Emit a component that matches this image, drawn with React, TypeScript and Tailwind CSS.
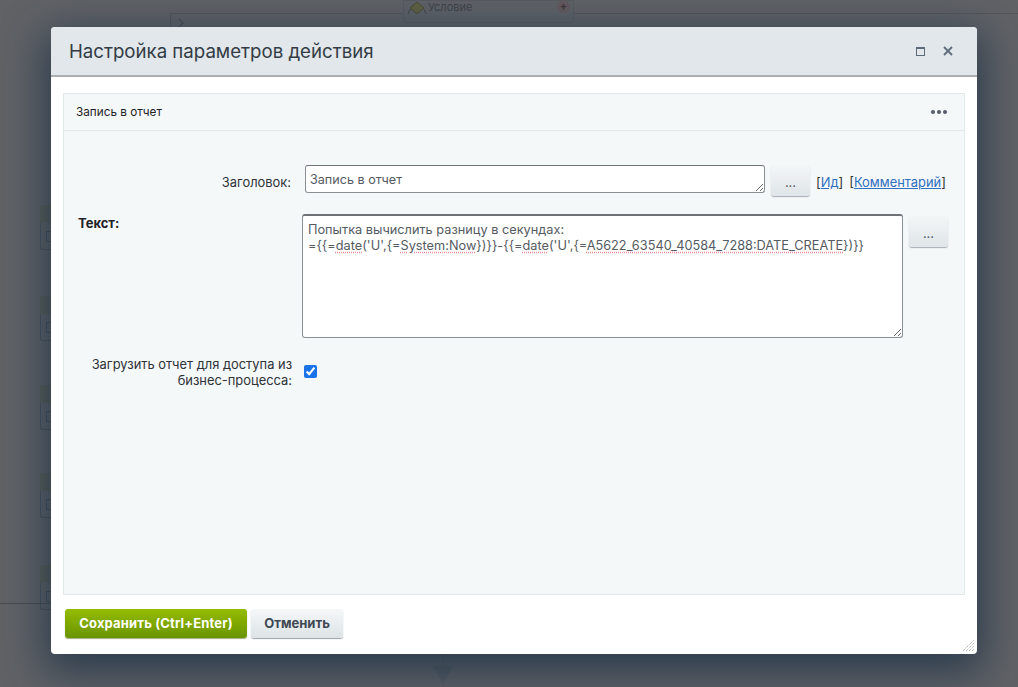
const font = { fontFamily: 'Inter, "Noto Sans", sans-serif' }

function DotsButton({ className }: { className: string }) {
  return (
    <button
      className={`w-[39px] h-[31px] shrink-0 rounded-[3px] bg-gradient-to-b from-[#f3f6f7] to-[#dfe5e8] shadow-[0_1px_1px_rgba(90,100,110,0.5)] text-[#535c69] text-[13px] leading-none ${className}`}
    >
      <span className="relative top-[2px]">...</span>
    </button>
  )
}

function Squiggle({ children }: { children: React.ReactNode }) {
  return (
    <span className="underline decoration-dotted decoration-[#eb8c9c] underline-offset-2">
      {children}
    </span>
  )
}

// blurred workflow designer behind the dialog
function Backdrop() {
  const cards = [205, 296, 385, 473, 565]
  return (
    <div className="absolute inset-0 overflow-hidden">
      <div className="absolute left-[403px] top-0 w-[171px] h-[23px] bg-[#5f6267] rounded-b-[4px] border border-[#585b60] flex items-start pl-[3px] text-[11px] leading-[12px] text-[#404347]">
        <svg width="20" height="14" viewBox="0 0 20 14" className="shrink-0">
          <path d="M10 1 L17 7 L10 13 L3 7 Z" fill="#5f6040" stroke="#4a4a30" strokeWidth="1" />
          <path d="M1 13 L3 8 M19 13 L17 8" fill="none" stroke="#43464a" strokeWidth="1" />
        </svg>
        <span className="ml-[1px]">Условие</span>
      </div>
      <div className="absolute left-[557px] top-0 w-[13px] h-[13px] rounded-full bg-[#64595e] text-[#403438] text-[11px] font-bold leading-[12px] text-center">
        +
      </div>
      <div className="absolute left-[170px] top-[13px] w-[233px] h-[20px] border-l border-t border-[#53565b]" />
      <svg width="8" height="10" viewBox="0 0 8 10" className="absolute left-[177px] top-[18px]">
        <path d="M2 1 L6 5 L2 9" fill="none" stroke="#4c4f54" strokeWidth="1.5" />
      </svg>
      <div className="absolute left-[574px] top-[13px] right-0 h-px bg-[#54575c]" />
      {cards.map((y) => (
        <div key={y} className="absolute left-[40px] w-[14px] h-[45px]" style={{ top: y }}>
          <div className="h-[18px] bg-[#5a5b50] opacity-70 rounded-tl-[3px]" />
          <div className="h-[27px] rounded-bl-[3px] border-l border-b border-[#4a515a] pl-[5px] pt-[8px]">
            <div className="w-[6px] h-[11px] border-l border-y border-[#454c55]" />
          </div>
        </div>
      ))}
      <div className="absolute left-0 top-[603px] w-[52px] h-px bg-[#484b50]" />
      <div className="absolute left-[443px] top-[654px] w-px h-[33px] bg-[#555b62]" />
      <div className="absolute left-[433px] top-[666px] w-0 h-0 border-x-[10px] border-x-transparent border-t-[18px] border-t-[#555b62]" />
    </div>
  )
}

export default function App() {
  return (
    <div
      className="relative w-[1018px] h-[687px] overflow-hidden bg-[#606266] pl-[51px] pt-[27px]"
      style={font}
    >
      <Backdrop />
      <div className="relative w-[926px] h-[627px] bg-white rounded-[4px] shadow-[0_12px_40px_6px_rgba(30,50,70,0.8)] flex flex-col">
        <div className="h-[50px] shrink-0 bg-[#e1e7ea] rounded-t-[4px] border-b-2 border-[#a9aeb2] flex items-center pl-[18px] pr-[24px]">
          <span className="text-[#333c45] text-[18.65px] leading-none flex-1">
            Настройка параметров действия
          </span>
          <span className="w-[9px] h-[9px] border border-[#5d6b7a] border-t-2 mr-[18px]" />
          <svg width="10" height="10" viewBox="0 0 10 10">
            <path d="M1 1 L9 9 M9 1 L1 9" stroke="#5d6b7a" strokeWidth="1.8" />
          </svg>
        </div>

        <div className="mx-[12px] mt-[16px] h-[502px] shrink-0 bg-[#f5f8f9] border border-[#e3e8e9] flex flex-col">
          <div className="h-[37px] shrink-0 border-b border-[#e3e8e9] flex items-center justify-between pl-[12px] pr-[17px]">
            <span className="text-[11.75px] text-[#1f2328] relative top-[1px]">Запись в отчет</span>
            <span className="flex gap-[2px]">
              <span className="w-[4px] h-[4px] rounded-full bg-[#535c69]" />
              <span className="w-[4px] h-[4px] rounded-full bg-[#535c69]" />
              <span className="w-[4px] h-[4px] rounded-full bg-[#535c69]" />
            </span>
          </div>

          <div className="flex items-start pt-[34px] text-[12.9px] text-[#333]">
            <label className="w-[227px] shrink-0 text-right text-[#2f3338] pt-[8px]">Заголовок:</label>
            <div className="ml-[14px] w-[460px] h-[28px] shrink-0 resize overflow-hidden bg-white rounded-[3px] border border-[#8a8f94] border-t-[#6e7378] text-[12.6px] text-[#555b62] pl-[4px] pt-[5px] leading-[18px]">
              Запись в отчет
            </div>
            <DotsButton className="ml-[6px]" />
            <div className="ml-[6px] pt-[8px] whitespace-nowrap text-[#333] text-[12.9px]">
              [<a className="text-[#2f6fc0] underline">Ид</a>]
              <span className="ml-[6px]">[<a className="text-[#2f6fc0] underline">Комментарий</a>]</span>
            </div>
          </div>

          <div className="flex items-start pt-[18px]">
            <div className="w-[238px] shrink-0 pl-[14px] text-[13px] font-bold text-[#1f2328]">Текст:</div>
            <div className="w-[601px] h-[124px] shrink-0 resize overflow-hidden bg-white rounded-[3px] border border-[#8a8f94] border-t-[#6e7378] border-t-2 text-[12.75px] leading-[16px] text-[#555b62] pl-[5px] pt-[6px] whitespace-nowrap">
              Попытка вычислить разницу в секундах:
              <br />
              ={'{{'}=<Squiggle>date</Squiggle>('U',{'{'}=<Squiggle>System:Now</Squiggle>{'}'}){'}}'}-{'{{'}=<Squiggle>date</Squiggle>('U',{'{'}=<Squiggle>A5622_63540_40584_7288:DATE_CREATE</Squiggle>{'}'}){'}}'}
            </div>
            <DotsButton className="ml-[6px] mt-[2px]" />
          </div>

          <div className="flex items-start pt-[19px]">
            <label className="w-[228px] shrink-0 text-right text-[12.9px] leading-[16px] text-[#2f3338]">
              Загрузить отчет для доступа из бизнес-процесса:
            </label>
            <input
              type="checkbox"
              defaultChecked
              className="ml-[12px] mt-[8px] w-[13px] h-[13px] accent-[#1a73e8]"
            />
          </div>
        </div>

        <div className="flex pl-[14px] pt-[14px] gap-[4px]">
          <button className="w-[182px] h-[29px] rounded-[3px] bg-gradient-to-b from-[#95bc00] to-[#6a9400] shadow-[0_1px_1px_rgba(70,90,0,0.5)] text-white text-[13px] font-bold tracking-[0.15px]">
            Сохранить (Ctrl+Enter)
          </button>
          <button className="w-[92px] h-[29px] rounded-[3px] bg-gradient-to-b from-[#f5f8f9] to-[#dde3e6] shadow-[0_1px_1px_rgba(90,100,110,0.6)] text-[#3f4853] text-[13px] font-bold">
            Отменить
          </button>
        </div>

        <svg width="13" height="13" viewBox="0 0 13 13" className="absolute right-[2px] bottom-[2px]">
          <path d="M1 12 L12 1 M4 12 L12 4 M7 12 L12 7 M10 12 L12 10" stroke="#9a9fa3" strokeWidth="1" strokeDasharray="1 1" />
        </svg>
      </div>
    </div>
  )
}
